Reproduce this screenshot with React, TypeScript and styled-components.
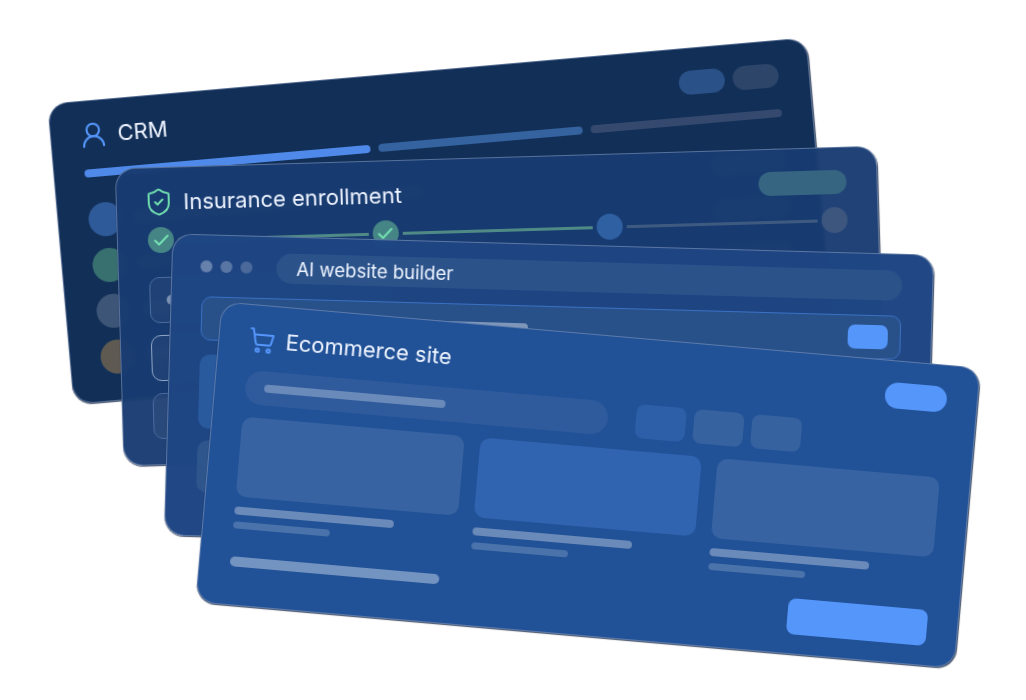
import React from 'react';
import styled, { createGlobalStyle } from 'styled-components';
import { Check, ShieldCheck, UserRound } from 'lucide-react';

const GlobalStyle = createGlobalStyle`
  html, body {
    background: #fff;
    margin: 0;
  }
  * {
    box-sizing: border-box;
  }
`;

const Stage = styled.div`
  font-family: Inter, "Liberation Sans", sans-serif;
  height: 700px;
  overflow: hidden;
  position: relative;
  width: 1026px;
`;

const Card = styled.div<{ $left: number; $top: number; $height: number; $angle: number; $bg: string }>`
  background: ${p => p.$bg};
  backdrop-filter: blur(1.5px);
  border: 1px solid rgba(130, 150, 185, 0.6);
  border-radius: 20px;
  box-shadow: 0.5px 1px 1px rgba(10, 25, 55, 0.75);
  height: ${p => p.$height}px;
  left: ${p => p.$left}px;
  padding: 21px 30px;
  position: absolute;
  top: ${p => p.$top}px;
  transform: rotate(${p => p.$angle}deg);
  width: 762px;
`;

const BuilderCard = styled(Card)`
  padding-top: 16px;
`;

const Header = styled.div`
  align-items: center;
  display: flex;
  height: 26px;
  justify-content: space-between;
`;

const TitleGroup = styled.div`
  align-items: center;
  display: flex;
  gap: 9.5px;
  margin-left: -3px;
`;

const CartGroup = styled(TitleGroup)`
  gap: 10.5px;
  margin-left: -1px;
`;

const Title = styled.span<{ $size?: number }>`
  color: #eef4ff;
  font-size: ${p => p.$size || 22}px;
  font-weight: 400;
  white-space: nowrap;
`;

const Pill = styled.div<{ $w: number; $h?: number; $bg: string }>`
  background: ${p => p.$bg};
  border-radius: 999px;
  flex: none;
  height: ${p => p.$h || 24}px;
  width: ${p => p.$w}px;
`;

const PillGroup = styled.div`
  display: flex;
  gap: 8px;
`;

/* CRM */
const Progress = styled.div`
  display: flex;
  gap: 8px;
  margin-top: 21px;
`;

const ProgressBar = styled.div<{ $w: number; $bg: string }>`
  background: ${p => p.$bg};
  border-radius: 4px;
  height: 8px;
  width: ${p => p.$w}px;
`;

const ContactList = styled.div`
  display: flex;
  flex-direction: column;
  gap: 12px;
  margin-top: 26px;
`;

const ContactRow = styled.div`
  align-items: center;
  display: flex;
  gap: 11px;
  height: 34px;
`;

const Avatar = styled.div<{ $bg: string }>`
  background: ${p => p.$bg};
  border-radius: 50%;
  flex: none;
  height: 34px;
  width: 34px;
`;

const ContactLine = styled.div`
  background: rgba(255, 255, 255, 0.2);
  border-radius: 6px;
  height: 12px;
  margin-right: auto;
  width: 290px;
`;

/* Insurance */
const Steps = styled.div`
  align-items: center;
  display: flex;
  gap: 4px;
  margin-top: 12px;
`;

const StepDot = styled.div<{ $bg: string }>`
  align-items: center;
  background: ${p => p.$bg};
  border-radius: 50%;
  color: #74e0b2;
  display: flex;
  flex: none;
  height: 26px;
  justify-content: center;
  width: 26px;
`;

const StepLine = styled.div<{ $bg: string }>`
  background: ${p => p.$bg};
  flex: 1;
  height: 3px;
`;

const Options = styled.div`
  display: flex;
  flex-direction: column;
  gap: 12px;
  margin-top: 24px;
`;

const Option = styled.div<{ $selected?: boolean }>`
  align-items: center;
  background: rgba(255, 255, 255, 0.04);
  border: 1.5px solid ${p => (p.$selected ? '#8fa5c6' : '#4a6b9e')};
  border-radius: 10px;
  display: flex;
  height: 46px;
  padding-left: 16px;
  width: 240px;
`;

const OptionDot = styled.div`
  background: #7d93b5;
  border-radius: 50%;
  height: 10px;
  width: 10px;
`;

/* AI builder */
const TopBar = styled.div`
  align-items: center;
  display: flex;
  justify-content: space-between;
`;

const WindowDots = styled.div`
  display: flex;
  gap: 8px;
  margin-left: -2px;
`;

const WindowDot = styled.div<{ $alpha: number }>`
  background: rgba(255, 255, 255, ${p => p.$alpha});
  border-radius: 50%;
  height: 12px;
  width: 12px;
`;

const Address = styled.div`
  align-items: center;
  background: #2b538a;
  border-radius: 15px;
  display: flex;
  flex: none;
  height: 30px;
  padding-left: 20px;
  width: 626px;
`;

const PromptBox = styled.div`
  align-items: center;
  background: #28518a;
  border: 1px solid #3a70c4;
  border-radius: 10px;
  display: flex;
  height: 44px;
  justify-content: space-between;
  margin-top: 15px;
  padding: 0 12px 0 19px;
`;

const PromptText = styled.div`
  background: rgba(255, 255, 255, 0.4);
  border-radius: 4px;
  height: 9px;
  width: 307px;
`;

const SendButton = styled.div`
  background: #5596fb;
  border-radius: 7px;
  height: 24px;
  width: 40px;
`;

const SideTiles = styled.div`
  display: flex;
  flex-direction: column;
  gap: 12px;
  margin-top: 14px;
  width: 220px;
`;

const SideTile = styled.div<{ $h: number; $bg: string }>`
  background: ${p => p.$bg};
  border-radius: 10px;
  height: ${p => p.$h}px;
`;

/* Ecommerce */
const Toolbar = styled.div`
  display: flex;
  margin-top: 18px;
`;

const Search = styled.div`
  align-items: center;
  background: #2f5b9d;
  border-radius: 17px;
  display: flex;
  height: 34px;
  padding-left: 19px;
  width: 364px;
`;

const SearchText = styled.div`
  background: #6a8ab9;
  border-radius: 4px;
  height: 8px;
  width: 182px;
`;

const Filters = styled.div`
  display: flex;
  gap: 8px;
  margin-left: 28px;
`;

const Filter = styled.div<{ $active?: boolean }>`
  background: ${p => (p.$active ? '#2c5fa8' : '#36629f')};
  border-radius: 8px;
  height: 34px;
  width: 50px;
`;

const Products = styled.div`
  display: grid;
  gap: 16px;
  grid-template-columns: repeat(3, 1fr);
  margin-top: 13px;
`;

const Product = styled.div`
  display: flex;
  flex-direction: column;
`;

const ProductImage = styled.div<{ $active?: boolean }>`
  background: ${p => (p.$active ? '#3064b1' : '#3763a2')};
  border-radius: 10px;
  height: 80px;
  margin-bottom: 10px;
`;

const ProductName = styled.div`
  background: #6a8ab9;
  border-radius: 4px;
  height: 8px;
  width: 160px;
`;

const ProductPrice = styled.div`
  background: #4a72ab;
  border-radius: 4px;
  height: 7px;
  margin-top: 7px;
  width: 97px;
`;

const Footer = styled.div`
  align-items: flex-start;
  display: flex;
  justify-content: space-between;
  margin-top: 21px;
`;

const FooterLine = styled.div`
  background: #7393c0;
  border-radius: 5px;
  height: 10px;
  margin-top: 7px;
  width: 210px;
`;

const CheckoutButton = styled.div`
  background: #5596fb;
  border-radius: 8px;
  height: 36px;
  width: 140px;
`;

const contacts = ['#2e5a99', '#38706f', '#3d5577', '#5e5a52'];

function CartIcon() {
  return (
    <svg width="27" height="27" viewBox="0 0 24 24" fill="none" stroke="#5596fb" strokeWidth="1.8" strokeLinecap="round" strokeLinejoin="round">
      <path d="M2.05 2.05h2l2.66 12.42a2 2 0 0 0 2 1.58h9.78a2 2 0 0 0 1.95-1.57l1.65-7.43H5.12" />
      <circle cx="8.6" cy="20.8" r="1.5" />
      <circle cx="18.4" cy="20.8" r="1.5" />
    </svg>
  );
}

export default function App() {
  return (
    <Stage>
      <GlobalStyle />

      <Card $left={59.4} $top={69.7} $height={302} $angle={-5} $bg="#122f57">
        <Header>
          <TitleGroup>
            <UserRound size={30} color="#5596fb" strokeWidth={1.7} />
            <Title>CRM</Title>
          </TitleGroup>
          <PillGroup>
            <Pill $w={46} $bg="#2a5289" />
            <Pill $w={46} $bg="#2c4569" />
          </PillGroup>
        </Header>
        <Progress>
          <ProgressBar $w={287} $bg="#4f8aea" />
          <ProgressBar $w={205} $bg="#34639f" />
          <ProgressBar $w={192} $bg="#34496d" />
        </Progress>
        <ContactList>
          {contacts.map(bg => (
            <ContactRow key={bg}>
              <Avatar $bg={bg} />
              <ContactLine />
              <Pill $w={76} $bg="rgba(255, 255, 255, 0.16)" />
            </ContactRow>
          ))}
        </ContactList>
      </Card>

      <Card $left={119} $top={156.7} $height={298} $angle={-1.7} $bg="rgba(23, 58, 112, 0.96)">
        <Header>
          <TitleGroup>
            <ShieldCheck size={30} color="#6fdcae" strokeWidth={1.6} />
            <Title>Insurance enrollment</Title>
          </TitleGroup>
          <Pill $w={88} $bg="#356580" />
        </Header>
        <Steps>
          <StepDot $bg="#468585"><Check size={19} strokeWidth={2.5} /></StepDot>
          <StepLine $bg="#4f8a86" />
          <StepDot $bg="#468585"><Check size={19} strokeWidth={2.5} /></StepDot>
          <StepLine $bg="#4f8a86" />
          <StepDot $bg="#2f60a2" />
          <StepLine $bg="#3e5a80" />
          <StepDot $bg="#3c567e" />
        </Steps>
        <Options>
          <Option><OptionDot /></Option>
          <Option $selected />
          <Option />
        </Options>
      </Card>

      <BuilderCard $left={168.1} $top={243.5} $height={302} $angle={1.6} $bg="rgba(29, 69, 130, 0.985)">
        <TopBar>
          <WindowDots>
            <WindowDot $alpha={0.32} />
            <WindowDot $alpha={0.26} />
            <WindowDot $alpha={0.2} />
          </WindowDots>
          <Address>
            <Title $size={18.6}>AI website builder</Title>
          </Address>
        </TopBar>
        <PromptBox>
          <PromptText />
          <SendButton />
        </PromptBox>
        <SideTiles>
          <SideTile $h={74} $bg="#2a5a9e" />
          <SideTile $h={52} $bg="#2f568c" />
        </SideTiles>
      </BuilderCard>

      <Card $left={207.3} $top={334} $height={302} $angle={5} $bg="#215196">
        <Header>
          <CartGroup>
            <CartIcon />
            <Title>Ecommerce site</Title>
          </CartGroup>
          <Pill $w={62} $h={26} $bg="#5596fb" />
        </Header>
        <Toolbar>
          <Search><SearchText /></Search>
          <Filters>
            <Filter $active />
            <Filter />
            <Filter />
          </Filters>
        </Toolbar>
        <Products>
          <Product>
            <ProductImage />
            <ProductName />
            <ProductPrice />
          </Product>
          <Product>
            <ProductImage $active />
            <ProductName />
            <ProductPrice />
          </Product>
          <Product>
            <ProductImage />
            <ProductName />
            <ProductPrice />
          </Product>
        </Products>
        <Footer>
          <FooterLine />
          <CheckoutButton />
        </Footer>
      </Card>
    </Stage>
  );
}
